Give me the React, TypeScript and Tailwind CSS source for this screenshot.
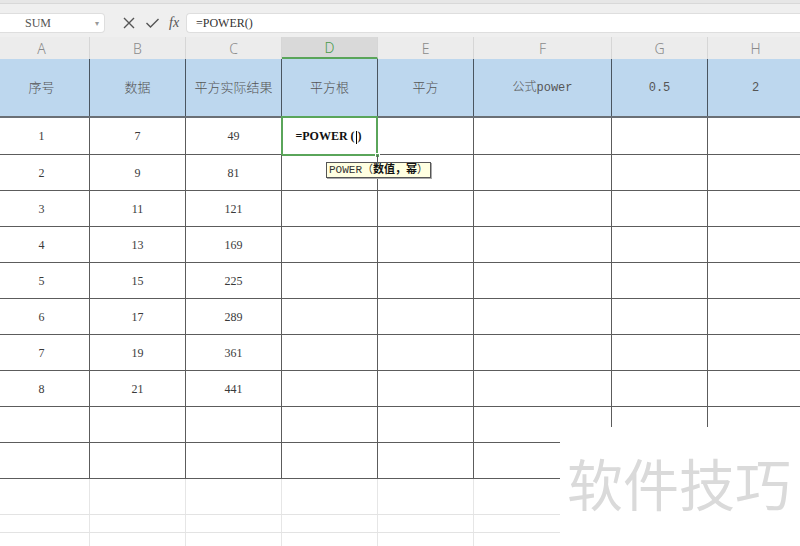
import React from "react";

const serif = { fontFamily: '"Liberation Serif", "Noto Sans CJK SC", serif' };
const cjk = { fontFamily: '"Liberation Serif", "Noto Sans CJK SC", serif', fontWeight: 300 };

const colW = ["w-[96px]", "w-[96px]", "w-[96px]", "w-[96px]", "w-[96px]", "w-[138px]", "w-[96px]", "w-[96px]"];
const letters = ["A", "B", "C", "D", "E", "F", "G", "H"];
const headers = ["序号", "数据", "平方实际结果", "平方根", "平方", "公式power", "0.5", "2"];
const data: (string | number)[][] = [
  [1, 7, 49],
  [2, 9, 81],
  [3, 11, 121],
  [4, 13, 169],
  [5, 15, 225],
  [6, 17, 289],
  [7, 19, 361],
  [8, 21, 441],
  ["", "", ""],
  ["", "", ""],
];

export default function App() {
  return (
    <div className="relative w-[800px] h-[546px] overflow-hidden bg-white">
      {/* toolbar */}
      <div className="h-[37px] bg-[#efefef] flex flex-col">
        <div className="h-[4px] bg-[#e6e6e6] border-b border-[#d8d8d8]" />
        <div className="flex items-center h-[21px] mt-[8px]">
          <div className="relative w-[105px] h-[20px] bg-white rounded-r-[4px] border border-l-0 border-[#dedede] flex items-center justify-center">
            <span className="text-[12px] text-[#555] ml-[-28px]" style={serif}>SUM</span>
            <span className="absolute right-[5px] top-[3px] text-[8px] text-[#999]">▾</span>
          </div>
          <div className="flex items-center w-[81px] pl-[17px] gap-[9px] text-[#555]">
            <svg width="14" height="14" viewBox="0 0 14 14"><path d="M2 2 L12 12 M12 2 L2 12" stroke="#555" strokeWidth="1.4" fill="none" /></svg>
            <svg width="15" height="14" viewBox="0 0 15 14"><path d="M1.5 7 L5.5 11 L13.5 3" stroke="#555" strokeWidth="1.4" fill="none" /></svg>
            <span className="italic text-[14px] leading-none text-[#555]" style={{ fontFamily: '"Liberation Serif", serif' }}>fx</span>
          </div>
          <div className="flex-1 h-[20px] bg-white rounded-l-[4px] border border-r-0 border-[#dedede] flex items-center pl-[9px]">
            <span className="text-[12px] text-[#333]" style={serif}>=POWER()</span>
          </div>
        </div>
      </div>

      {/* column headers */}
      <div className="flex ml-[-6px] h-[22px] bg-[#ececec]">
        {letters.map((l, i) => (
          <div
            key={l}
            className={`${colW[i]} shrink-0 flex items-center justify-center text-[14px] border-r border-[#d6d6d6] ${
              i === 3 ? "bg-[#d9d9d9] text-[#4a9a4a] border-b-2 border-b-[#5aa55a]" : "text-[#8a8a8a]"
            }`}
            style={{ fontFamily: '"Noto Sans", sans-serif', fontWeight: 300 }}
          >
            {l}
          </div>
        ))}
      </div>

      {/* header row */}
      <div className="flex ml-[-6px] h-[59px] bg-[#bdd7ee] border-b-2 border-[#6a6f75]">
        {headers.map((h, i) => (
          <div
            key={i}
            className={`${colW[i]} shrink-0 flex items-center justify-center text-[13px] text-[#555] border-r-[1.5px] border-[#4a5560]`}
            style={i >= 5 ? { fontFamily: '"Liberation Mono", "Noto Sans CJK SC", monospace', fontSize: 12, fontWeight: 300 } : cjk}
          >
            {h}
          </div>
        ))}
      </div>

      {/* data rows */}
      {data.map((r, ri) => (
        <div key={ri} className={`flex ml-[-6px] ${ri === 0 ? "h-[37px]" : "h-[36px]"} border-b-[1.5px] border-[#5c5c5c]`}>
          {colW.map((w, ci) => (
            <div
              key={ci}
              className={`${w} shrink-0 relative flex items-center justify-center text-[12px] text-[#3a3a3a] border-r-[1.5px] border-[#5c5c5c]`}
              style={serif}
            >
              {ci < 3 ? r[ci] : ""}
              {ri === 0 && ci === 3 && (
                <>
                  <div className="absolute left-[-1px] top-[-2px] right-[-1px] bottom-[-2px] border-2 border-[#5aa55a]" />
                  <span className="relative font-bold text-[12px] text-[#111] ml-[-2px] whitespace-nowrap" style={serif}>
                    =POWER (<span className="inline-block w-[1px] h-[13px] bg-black align-middle mx-[1px]" />)
                  </span>
                  <div className="absolute right-[-3px] bottom-[-4px] w-[5px] h-[5px] bg-[#5aa55a] border border-white" />
                </>
              )}
            </div>
          ))}
        </div>
      ))}

      {/* light grid rows */}
      {["h-[36px]", "h-[18px]", "h-[20px]"].map((h, ri) => (
        <div key={ri} className={`flex ml-[-6px] ${h} ${ri < 2 ? "border-b border-[#e3e3e3]" : ""}`}>
          {colW.map((w, ci) => (
            <div key={ci} className={`${w} shrink-0 border-r border-[#e6e6e6]`} />
          ))}
        </div>
      ))}

      {/* tooltip */}
      <div
        className="absolute left-[326px] top-[162px] h-[16px] px-[2px] flex items-center bg-[#ffffe1] border border-[#555] shadow-[1px_1px_0_#aaa] text-[11px] text-[#333] leading-none whitespace-nowrap"
        style={{ fontFamily: '"Liberation Mono", "Noto Sans CJK SC", monospace' }}
      >
        POWER（<b className="text-[#111]">数值，幂</b>）
      </div>

      {/* watermark overlay */}
      <div className="absolute left-[560px] top-[427px] w-[240px] h-[119px] bg-white flex items-start">
        <span
          className="mt-[27px] ml-[7px] text-[56px] leading-none text-[#dadada]"
          style={{ fontFamily: '"Noto Sans CJK SC", sans-serif' }}
        >
          软件技巧
        </span>
      </div>
    </div>
  );
}
